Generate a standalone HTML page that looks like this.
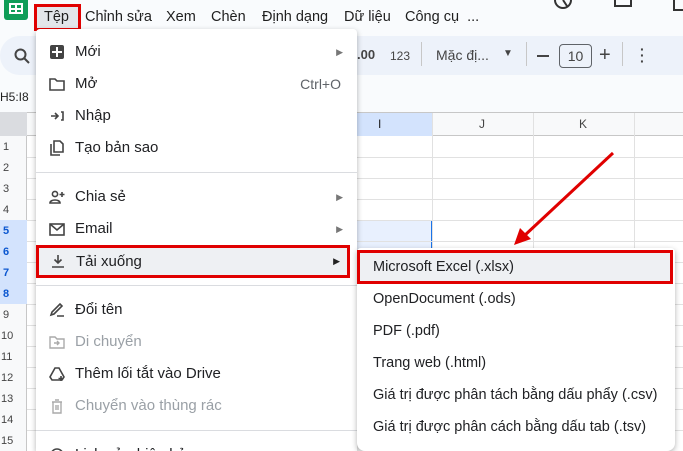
<!DOCTYPE html>
<html style="width:683px;height:451px;overflow:hidden"><head><meta charset="utf-8"><style>
*{margin:0;padding:0;box-sizing:border-box}
body{width:683px;height:451px;overflow:hidden;background:#f9fbfd;font-family:"Liberation Sans",Arial,sans-serif;position:relative;color:#202124}
.abs{position:absolute}
.top{font-size:14.5px;top:9px;color:#1f1f1f}
.menu{position:absolute;background:#fff;box-shadow:0 2px 6px rgba(0,0,0,.3);border-radius:4px}
.it{position:absolute;left:0;right:0;height:32px;font-size:15px;line-height:32px;padding-left:39px;color:#202124}
.it.dis{color:#9aa0a6}
.ic{position:absolute;left:13px;top:8px;width:16px;height:16px}
.arr{position:absolute;right:14px;top:0;font-size:9px;color:#777}
.sc{position:absolute;right:16px;top:0;color:#5f6368;font-size:14px}
.sep{position:absolute;left:0;right:0;height:1px;background:#dadce0}
.sub{position:absolute;left:16px;font-size:14.5px;color:#202124;height:32px;line-height:32px}
</style></head><body>
<div class="abs" style="left:0;top:112px;width:683px;height:339px;background:#fff"></div>
<div class="abs" style="left:0;top:112px;width:683px;height:24px;background:#f8f9fa;border-top:1px solid #c7c7c7;border-bottom:1px solid #c7c7c7"></div>
<div class="abs" style="left:0;top:112px;width:27px;height:339px;background:#f8f9fa;border-right:1px solid #c7c7c7"></div>
<div class="abs" style="left:0;top:112px;width:27px;height:24px;background:#dadce0"></div>
<div class="abs" style="left:340px;top:113px;width:92px;height:23px;background:#d3e3fd"></div>
<div class="abs" style="left:378px;top:117px;font-size:12px;color:#1f1f1f">I</div>
<div class="abs" style="left:479px;top:117px;font-size:12px;color:#444">J</div>
<div class="abs" style="left:579px;top:117px;font-size:12px;color:#444">K</div>
<div class="abs" style="left:340px;top:220px;width:92px;height:84px;background:#e8f0fe;border:1px solid #1a73e8;border-bottom:none"></div>
<div class="abs" style="left:0;top:220px;width:27px;height:84px;background:#d3e3fd"></div>
<svg class="abs" style="left:0;top:0" width="683" height="451">
<g stroke="#e1e1e1" stroke-width="1">
<line x1="432.5" y1="113" x2="432.5" y2="451"/><line x1="533.5" y1="113" x2="533.5" y2="451"/><line x1="634.5" y1="113" x2="634.5" y2="451"/>
<line x1="27" y1="157.5" x2="683" y2="157.5"/><line x1="27" y1="178.5" x2="683" y2="178.5"/><line x1="27" y1="199.5" x2="683" y2="199.5"/><line x1="27" y1="220.5" x2="683" y2="220.5"/><line x1="27" y1="241.5" x2="683" y2="241.5"/><line x1="27" y1="262.5" x2="683" y2="262.5"/><line x1="27" y1="283.5" x2="683" y2="283.5"/><line x1="27" y1="304.5" x2="683" y2="304.5"/><line x1="27" y1="325.5" x2="683" y2="325.5"/><line x1="27" y1="346.5" x2="683" y2="346.5"/><line x1="27" y1="367.5" x2="683" y2="367.5"/><line x1="27" y1="388.5" x2="683" y2="388.5"/><line x1="27" y1="409.5" x2="683" y2="409.5"/><line x1="27" y1="430.5" x2="683" y2="430.5"/>
</g>
<g font-family="Liberation Sans" font-size="11" fill="#444">
<text x="3" y="150">1</text><text x="3" y="171">2</text><text x="3" y="192">3</text><text x="3" y="213">4</text><text x="3" y="234" fill="#0b57d0" font-weight="bold">5</text><text x="3" y="255" font-weight="bold" fill="#0b57d0">6</text><text x="3" y="276" font-weight="bold" fill="#0b57d0">7</text><text x="3" y="297" font-weight="bold" fill="#0b57d0">8</text><text x="3" y="318">9</text><text x="1" y="339">10</text><text x="1" y="360">11</text><text x="1" y="381">12</text><text x="1" y="402">13</text><text x="1" y="423">14</text><text x="1" y="444">15</text>
</g>
</svg>
<div class="abs" style="left:0;top:90px;font-size:12px;color:#1f1f1f">H5:I8</div>
<div class="abs" style="left:0;top:36px;width:683px;height:39px;background:#edf2fa;border-radius:20px 0 0 20px"></div>
<svg class="abs" style="left:14px;top:48px" width="16" height="16"><circle cx="6.5" cy="6.5" r="5" fill="none" stroke="#444" stroke-width="2"/><line x1="10" y1="10" x2="15" y2="15" stroke="#444" stroke-width="2"/></svg>
<div class="abs" style="left:357px;top:47px;font-size:13px;font-weight:bold;color:#444">.00</div>
<div class="abs" style="left:390px;top:49px;font-size:12px;color:#444">123</div>
<div class="abs" style="left:421px;top:42px;width:1px;height:24px;background:#c7c7c7"></div>
<div class="abs" style="left:436px;top:47px;font-size:14px;color:#444">Mặc đị...</div>
<div class="abs" style="left:503px;top:48px;font-size:10px;color:#444">▼</div>
<div class="abs" style="left:526px;top:42px;width:1px;height:24px;background:#c7c7c7"></div>
<div class="abs" style="left:537px;top:55px;width:12px;height:2px;background:#444"></div>
<div class="abs" style="left:559px;top:44px;width:33px;height:24px;border:1px solid #5f6368;border-radius:4px;font-size:14px;text-align:center;line-height:22px;color:#444">10</div>
<div class="abs" style="left:599px;top:44px;font-size:20px;color:#444">+</div>
<div class="abs" style="left:622px;top:42px;width:1px;height:24px;background:#c7c7c7"></div>
<div class="abs" style="left:640px;top:46px;font-size:14px;color:#444;font-weight:bold;line-height:6px">·<br>·<br>·</div>
<div class="abs" style="left:4px;top:0;width:24px;height:20px;background:#0f9d58;border-radius:0 0 3px 3px"></div>
<div class="abs" style="left:9px;top:3px;width:14px;height:11px;border:2px solid #fff;background:linear-gradient(#fff,#fff) 4px 0/2px 100% no-repeat,linear-gradient(#fff,#fff) 0 3px/100% 2px no-repeat"></div>
<div class="abs" style="left:34px;top:4px;width:47px;height:27px;background:#e3e6ea;border:3px solid #e00000"></div>
<div class="top abs" style="left:44px">Tệp</div>
<div class="top abs" style="left:85px">Chỉnh sửa</div>
<div class="top abs" style="left:166px">Xem</div>
<div class="top abs" style="left:211px">Chèn</div>
<div class="top abs" style="left:262px">Định dạng</div>
<div class="top abs" style="left:344px">Dữ liệu</div>
<div class="top abs" style="left:405px">Công cụ &nbsp;...</div>
<svg class="abs" style="left:550px;top:0" width="133" height="14"><circle cx="13" cy="0" r="8" fill="none" stroke="#333" stroke-width="2"/><line x1="13" y1="0" x2="17" y2="6" stroke="#333" stroke-width="2"/><rect x="65" y="-4" width="16" height="10" fill="none" stroke="#333" stroke-width="2"/><path d="M124 -2 V10 H133" fill="none" stroke="#333" stroke-width="2"/></svg>
<div class="menu" style="left:36px;top:29px;width:321px;height:422px;overflow:hidden;border-radius:4px 4px 0 0">
 <div class="it" style="top:7px"><svg class="ic" viewBox="0 0 16 16"><rect x="1" y="1" width="14" height="14" rx="2" fill="#444"/><rect x="7" y="3" width="2" height="10" fill="#fff"/><rect x="3" y="7" width="10" height="2" fill="#fff"/></svg>Mới<span class="arr">▶</span></div>
 <div class="it" style="top:39px"><svg class="ic" viewBox="0 0 16 16"><path d="M1 3H6L8 5H15V14H1Z" fill="none" stroke="#444" stroke-width="1.6"/></svg>Mở<span class="sc">Ctrl+O</span></div>
 <div class="it" style="top:71px"><svg class="ic" viewBox="0 0 16 16"><path d="M2 8H9M6 5L9 8L6 11M12 4H14V12H12" fill="none" stroke="#444" stroke-width="1.6"/></svg>Nhập</div>
 <div class="it" style="top:103px"><svg class="ic" viewBox="0 0 16 16"><path d="M5 1H11L14 4V12H5Z M2 4V15H11" fill="none" stroke="#444" stroke-width="1.6"/></svg>Tạo bản sao</div>
 <div class="sep" style="top:143px"></div>
 <div class="it" style="top:152px"><svg class="ic" viewBox="0 0 16 16"><circle cx="6" cy="5" r="2.6" fill="none" stroke="#444" stroke-width="1.6"/><path d="M1 14C1 10 11 10 11 14Z" fill="none" stroke="#444" stroke-width="1.6"/><path d="M13 3V8M10.5 5.5H15.5" stroke="#444" stroke-width="1.6"/></svg>Chia sẻ<span class="arr">▶</span></div>
 <div class="it" style="top:184px"><svg class="ic" viewBox="0 0 16 16"><rect x="1" y="3" width="14" height="11" fill="none" stroke="#444" stroke-width="1.6"/><path d="M1 3L8 9L15 3" fill="none" stroke="#444" stroke-width="1.6"/></svg>Email<span class="arr">▶</span></div>
 <div class="it" style="top:216px;background:#eef0f3;left:0;right:7px;border:3px solid #e00000;height:33px;line-height:27px;padding-left:37px"><svg class="ic" viewBox="0 0 16 16" style="left:11px;top:5px"><path d="M8 2V10M4.5 6.5L8 10L11.5 6.5M2 14H14" fill="none" stroke="#444" stroke-width="1.6"/></svg>Tải xuống<span class="arr" style="color:#222;right:7px">▶</span></div>
 <div class="sep" style="top:256px"></div>
 <div class="it" style="top:265px"><svg class="ic" viewBox="0 0 16 16"><path d="M2 13L3 10L11 2L13 4L5 12Z M8 14H15" fill="none" stroke="#444" stroke-width="1.6"/></svg>Đổi tên</div>
 <div class="it dis" style="top:297px"><svg class="ic" viewBox="0 0 16 16"><path d="M1 3H6L8 5H15V14H1Z M5 9H10M8 7L10 9L8 11" fill="none" stroke="#aaa" stroke-width="1.4"/></svg>Di chuyển</div>
 <div class="it" style="top:329px"><svg class="ic" viewBox="0 0 16 16"><path d="M6 2H10L15 11L13 14H3L1 11Z" fill="none" stroke="#444" stroke-width="1.6"/><path d="M12 10V15M9.5 12.5H14.5" stroke="#444" stroke-width="1.6"/></svg>Thêm lối tắt vào Drive</div>
 <div class="it dis" style="top:361px"><svg class="ic" viewBox="0 0 16 16"><path d="M3 4H13M6 2H10M4 4V15H12V4M7 7V12M9 7V12" fill="none" stroke="#aaa" stroke-width="1.4"/></svg>Chuyển vào thùng rác</div>
 <div class="sep" style="top:401px"></div>
 <div class="it" style="top:410px"><svg class="ic" viewBox="0 0 16 16"><circle cx="8" cy="8" r="6" fill="none" stroke="#444" stroke-width="1.6"/></svg>Lịch sử phiên bản</div>
</div>
<div class="menu" style="left:357px;top:248px;width:318px;height:203px;border-radius:4px 4px 8px 8px">
 <div class="abs" style="left:0;top:2px;width:316px;height:34px;background:#eef0f3;border:3px solid #e00000"></div>
 <div class="sub" style="top:3px">Microsoft Excel (.xlsx)</div>
 <div class="sub" style="top:35px">OpenDocument (.ods)</div>
 <div class="sub" style="top:67px">PDF (.pdf)</div>
 <div class="sub" style="top:99px">Trang web (.html)</div>
 <div class="sub" style="top:131px">Giá trị được phân tách bằng dấu phẩy (.csv)</div>
 <div class="sub" style="top:163px">Giá trị được phân cách bằng dấu tab (.tsv)</div>
</div>
<svg class="abs" style="left:0;top:0" width="683" height="451"><line x1="613" y1="153" x2="524" y2="236" stroke="#e00000" stroke-width="3"/><path d="M514 245L520 228L531 239Z" fill="#e00000"/></svg>
</body></html>
